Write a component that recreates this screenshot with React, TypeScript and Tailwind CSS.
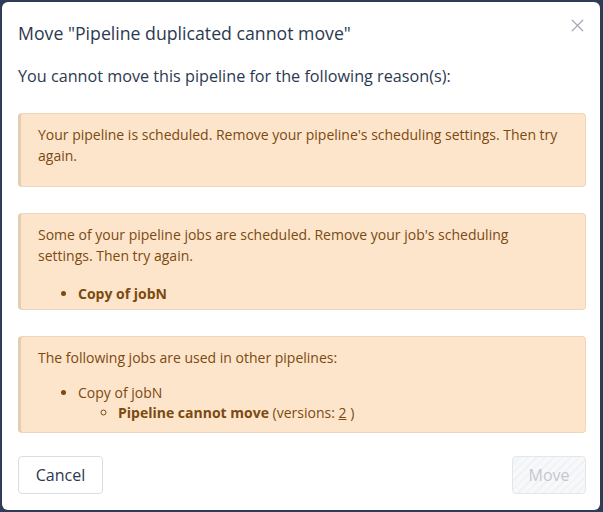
import { X } from "lucide-react";

const box =
  "rounded-[4px] border border-l-[3px] border-[#eed6bd] border-l-[#e4cdb1] bg-[#fde5cc] pl-[17px] pr-[21px] text-[14px] leading-[21px] text-[#7b4a10]";

export default function App() {
  return (
    <div className="h-[512px] w-[603px] bg-[#2e3d55] p-[2px] pr-[3px]" style={{ fontFamily: "'Open Sans', 'Noto Sans', sans-serif" }}>
      <div className="relative flex h-[508px] flex-col rounded-md bg-white pl-4 pr-[14px] pt-[19px]">
        <button className="absolute right-[12px] top-[13px] text-[#a3abb6]">
          <X size={21} strokeWidth={1.5} />
        </button>
        <h2 className="text-[17.7px] leading-[24px] text-[#2b3950]">Move "Pipeline duplicated cannot move"</h2>
        <p className="mt-[20px] text-[16.2px] font-medium leading-[22px] text-[#2b3950]">
          You cannot move this pipeline for the following reason(s):
        </p>

        <div className={`mt-[26px] h-[74px] pt-[10px] ${box}`}>
          <p>Your pipeline is scheduled. Remove your pipeline's scheduling settings. Then try again.</p>
        </div>

        <div className={`mt-[26px] h-[97px] pt-[10px] ${box}`}>
          <p>Some of your pipeline jobs are scheduled. Remove your job's scheduling settings. Then try again.</p>
          <ul className="mt-[17px] list-disc pl-[40px]">
            <li className="font-bold">Copy of jobN</li>
          </ul>
        </div>

        <div className={`mt-[26px] h-[97px] pt-[10px] ${box}`}>
          <p>The following jobs are used in other pipelines:</p>
          <ul className="mt-[15px] list-disc pl-[40px] leading-[20px]">
            <li>
              Copy of jobN
              <ul className="list-[circle] pl-[40px]">
                <li>
                  <span className="font-bold">Pipeline cannot move</span> (versions: <span className="underline">2</span> )
                </li>
              </ul>
            </li>
          </ul>
        </div>

        <div className="mt-[23px] flex items-center justify-between">
          <button className="h-[38px] w-[85px] rounded-[4px] border border-[#d9dde4] text-[16px] text-[#2b3950]">Cancel</button>
          <button
            disabled
            className="h-[38px] w-[74px] rounded-[4px] border border-[#e3e6ea] text-[16px] text-[#c4c8ce]"
            style={{ backgroundImage: "repeating-linear-gradient(135deg, #f7f8fa 0 4px, #f0f2f5 4px 6px)" }}
          >
            Move
          </button>
        </div>
      </div>
    </div>
  );
}
